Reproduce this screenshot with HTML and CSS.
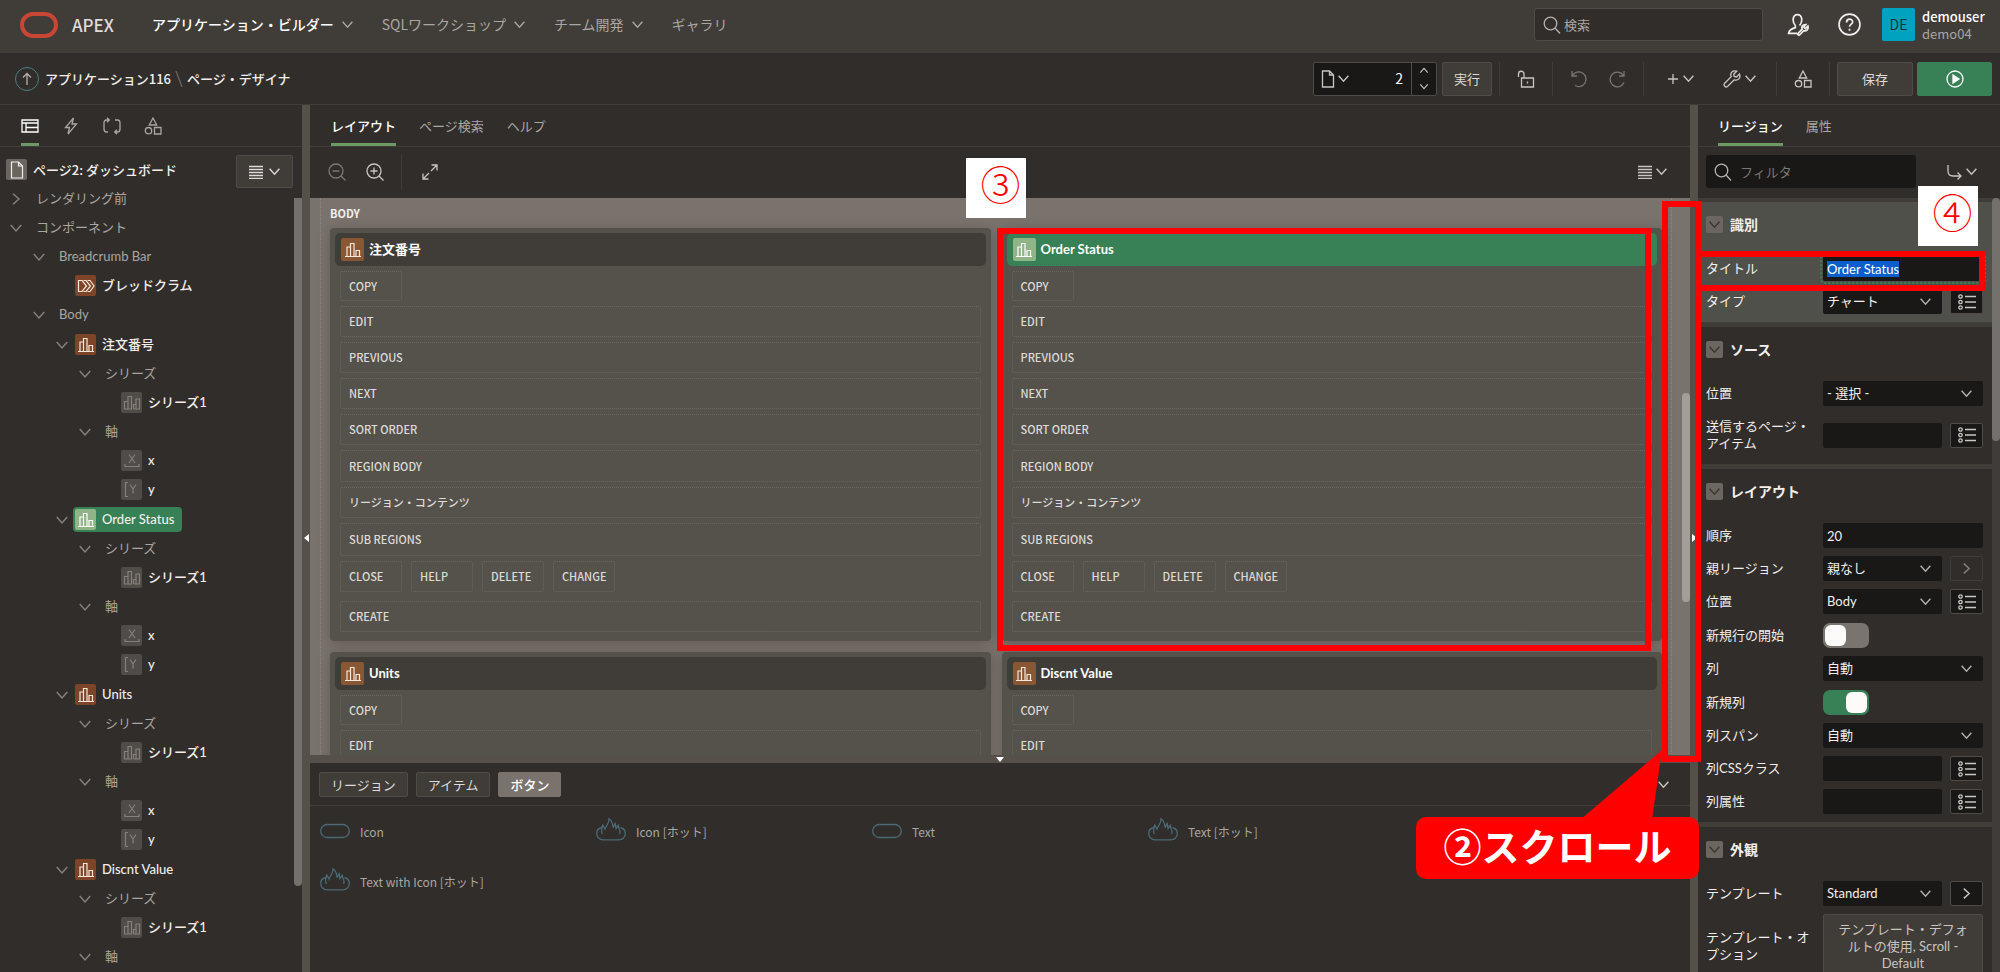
FILE: index.html
```html
<!DOCTYPE html>
<html lang="ja">

<head>
    <meta charset="UTF-8">
    <meta name="viewport" content="width=device-width, initial-scale=1.0">
    <title>ページ・デザイナ</title>
    <link rel="stylesheet" href="styles.css">
</head>

<body>
    <svg class="sprite" aria-hidden="true">
        <symbol id="down" viewBox="0 0 12 12"><path d="M1.5 3.5 6 8.5l4.5-5" /></symbol>
        <symbol id="right" viewBox="0 0 12 12"><path d="M3.5 1.5 8.5 6l-5 4.5" /></symbol>
        <symbol id="up" viewBox="0 0 12 12"><path d="M1.5 8.5 6 3.5l4.5 5" /></symbol>
        <symbol id="search" viewBox="0 0 18 18"><circle cx="7.5" cy="7.5" r="6.3" /><path d="m12 12 5 5.5" /></symbol>
        <symbol id="minus" viewBox="0 0 18 18"><circle cx="8" cy="8" r="7" /><path d="m13 13 4.500 4.500M4.500 8h7" /></symbol>
        <symbol id="plus" viewBox="0 0 18 18"><circle cx="8" cy="8" r="7" /><path d="m13 13 4.500 4.500M4.500 8h7M8 4.500v7" /></symbol>
        <symbol id="list" viewBox="0 0 14 14"><path d="M0 1.500h14M0 4.500h14M0 7.500h14M0 10.500h14M0 13.500h14" /></symbol>
        <symbol id="doc" viewBox="0 0 18 18"><path d="M3.5 1h7l4 4v12h-11zM10.500 1v4h4" /></symbol>
        <symbol id="shapes" viewBox="0 0 18 18"><path d="m9 1 3.700 7H5.300zM10.500 10.500h6.500V17h-6.500z" /><circle cx="4.500" cy="13.700" r="3.200" /></symbol>
        <symbol id="chart" viewBox="0 0 18 18"><path d="M1 15.500h16M3 15.500V6h3.500v9.500M6.500 15.500V2.500H10v13M12 15.500V9.500h3.500v6" /></symbol>
        <symbol id="series" viewBox="0 0 18 18"><path d="M1.500 15V7.500H5V15zM5 15V2.500h3.500V15zM10.500 15v-4.500h2.500M13 15V5h3.500v10h-6" /></symbol>
        <symbol id="crumb" viewBox="0 0 18 18"><path d="M1.500 3.500h3.500L9.500 9 5 14.500H1.500zM6.500 3.500h2.500l4.500 5.500L9 14.500H6.500M10.500 3.500H13L17 9l-4 5.500h-2.500" /></symbol>
        <symbol id="axis-x" viewBox="0 0 18 18"><path d="M6 2.500 12 11M12 2.500 6 11M2 12v2.500h14V12" /></symbol>
        <symbol id="axis-y" viewBox="0 0 18 18"><path d="M5 1.500H2.500v14H5M7 3.500l3 4.500 3-4.500M10 8v4.500" /></symbol>
        <symbol id="picker" viewBox="0 0 18 16"><circle cx="2.500" cy="2.500" r="1.700" /><circle cx="2.500" cy="8" r="1.700" /><circle cx="2.500" cy="13.500" r="1.700" /><path d="M7 2.500h11M7 8h11M7 13.500h11" /></symbol>
        <symbol id="pill" viewBox="0 0 30 26"><rect x=".7" y="6.500" width="28.600" height="13" rx="6.500" /></symbol>
        <symbol id="fire" viewBox="0 0 30 26"><path d="M5.500 9.500C1.500 10.500.7 13 .7 15.500a6.300 6.300 0 0 0 6.300 6.300h16a6.300 6.300 0 0 0 6.300-6.300c0-2.500-.8-5-4.800-6M6.500 16c-2-3-.5-6 .3-9 1 1.500 1.700 2.500 2.200 4C10.500 7 13.500 5 13 .8c2.800 2 4 5.500 4 9l2.200-4.300c.5 2 .6 3.500.8 5l2.300-3c0 3 3 5.500 1.200 8.500" /></symbol>
    </svg>

    <header class="header">
        <svg class="logo" viewBox="0 0 38 26"><rect x="2" y="2" width="34" height="22" rx="11" /></svg>
        <span class="brand">APEX</span>
        <nav class="nav">
            <a class="active" href="#">アプリケーション・ビルダー<svg class="ic s"><use href="#down" /></svg></a>
            <a href="#">SQLワークショップ<svg class="ic s"><use href="#down" /></svg></a>
            <a href="#">チーム開発<svg class="ic s"><use href="#down" /></svg></a>
            <a href="#">ギャラリ</a>
        </nav>
        <label class="search">
            <svg class="ic l"><use href="#search" /></svg>
            <input type="text" placeholder="検索" aria-label="検索">
        </label>
        <button class="head-btn" type="button" aria-label="管理">
            <svg class="ic xl" viewBox="0 0 22 22"><path d="M8 12C4.500 8 5.500 1.500 10 1.500S15.500 8 12 12M8 12v2c-3 .8-6 2-6.500 5.500h8M20 12.500l-2.500 2.500-1.500-1.500 2-2.500c-3-.3-4.500 2-3.500 4.500L10 20l1.500 1.500 4.500-4.500c2.500.8 5-1.500 4-4.500z" /></svg>
        </button>
        <button class="head-btn" type="button" aria-label="ヘルプ">
            <svg class="ic xl" viewBox="0 0 22 22"><circle cx="11" cy="11" r="10" /><path d="M8.200 9c0-4 5.800-4 5.800-.5 0 2-3 2.300-3 4.700M11 15v2" /></svg>
        </button>
        <div class="avatar">DE</div>
        <div class="user"><b>demouser</b><span>demo04</span></div>
    </header>

    <div class="toolbar">
        <a class="up" href="#" aria-label="上へ"><svg class="ic l" viewBox="0 0 18 18"><path d="M9 15V3.500M5 7.500l4-4 4 4" /></svg></a>
        <a class="crumb" href="#">アプリケーション116</a>
        <svg class="ic slash" viewBox="0 0 8 16"><path d="m1 0 6 16" /></svg>
        <span class="crumb">ページ・デザイナ</span>
        <div class="tools">
            <div class="combo">
                <button type="button" aria-label="ページ"><svg class="ic l"><use href="#doc" /></svg><svg class="ic s"><use href="#down" /></svg></button>
                <input type="text" value="2" aria-label="ページ番号">
                <div class="spin">
                    <button type="button" aria-label="次"><svg class="ic s"><use href="#up" /></svg></button>
                    <button type="button" aria-label="前"><svg class="ic s"><use href="#down" /></svg></button>
                </div>
            </div>
            <button class="btn run" type="button">実行</button>
            <div class="group">
                <button class="tool" type="button" aria-label="ロック"><svg class="ic l" viewBox="0 0 18 18"><path d="M4.500 12V8h12v9h-12V8M1.500 7V4a2.700 2.700 0 0 1 5.500 0v4M10.500 11.500v2" /></svg></button>
            </div>
            <div class="group dim">
                <button class="tool" type="button" aria-label="元に戻す"><svg class="ic l" viewBox="0 0 18 18"><path d="M2 1v5h5M2.500 5.500A7.300 7.300 0 1 1 5 15.500" /></svg></button>
                <button class="tool" type="button" aria-label="やり直し"><svg class="ic l" viewBox="0 0 18 18"><path d="M16 1v5h-5M15.500 5.500A7.300 7.300 0 1 0 16 12.500" /></svg></button>
            </div>
            <div class="group">
                <button class="tool wide" type="button" aria-label="作成"><svg class="ic" viewBox="0 0 12 12"><path d="M6 1v10M1 6h10" /></svg><svg class="ic s"><use href="#down" /></svg></button>
                <button class="tool wide" type="button" aria-label="ユーティリティ"><svg class="ic l" viewBox="0 0 18 18"><path d="m16.500 4-3 3-2.300-.5-.5-2.300 3-3c-4-1.400-7 1.800-5.500 5.500L1.500 13.500c-1.400 2 1 4.500 3 3l6.800-6.700C15 11 18 8 16.500 4z" /></svg><svg class="ic s"><use href="#down" /></svg></button>
            </div>
            <div class="group">
                <button class="tool" type="button" aria-label="共有コンポーネント"><svg class="ic l"><use href="#shapes" /></svg></button>
            </div>
            <div class="group actions">
                <button class="btn" type="button">保存</button>
                <button class="btn go" type="button" aria-label="保存して実行"><svg class="ic l" viewBox="0 0 18 18"><circle cx="9" cy="9" r="8" /><path class="solid" d="m7 5 6 4-6 4z" /></svg></button>
            </div>
        </div>
    </div>

    <div class="designer">
        <aside class="left">
            <div class="tabs icons">
                <button class="active" type="button" aria-label="レンダリング"><svg class="ic l" viewBox="0 0 18 18"><path d="M1 3h16v12H1zM1 6h16M5 6v9M5 10.500h12" /></svg></button>
                <button type="button" aria-label="動的アクション"><svg class="ic l" viewBox="0 0 18 18"><path d="M11.500 1 3.500 10.500h4L6 17l8.500-10h-4.500z" /></svg></button>
                <button type="button" aria-label="処理"><svg class="ic l" viewBox="0 0 18 18"><path d="M6 3H3.500Q1 3 1 6v6q0 3 2.500 3H5M4 .8 6.300 3 4 5.200M12 15h2.500q2.500 0 2.500-3V6q0-3-2.500-3H12M14 12.800 11.700 15l2.300 2.200" /></svg></button>
                <button type="button" aria-label="共有コンポーネント"><svg class="ic l"><use href="#shapes" /></svg></button>
            </div>
            <div class="page-title">
                <span class="box page"><svg class="ic l"><use href="#doc" /></svg></span>
                <span>ページ2: ダッシュボード</span>
                <button class="btn menu" type="button" aria-label="メニュー"><svg class="ic m"><use href="#list" /></svg><svg class="ic s"><use href="#down" /></svg></button>
            </div>
            <div class="tree-wrap">
                <ul class="tree">
                    <li class="group-row"><svg class="ic s"><use href="#right" /></svg>レンダリング前</li>
                    <li class="group-row"><svg class="ic s"><use href="#down" /></svg>コンポーネント</li>
                    <li class="group-row l1"><svg class="ic s"><use href="#down" /></svg>Breadcrumb Bar</li>
                    <li class="l2 leaf"><span class="box orange"><svg class="ic l"><use href="#crumb" /></svg></span>ブレッドクラム</li>
                    <li class="group-row l1"><svg class="ic s"><use href="#down" /></svg>Body</li>

                    <li class="l2 region-row"><svg class="ic s"><use href="#down" /></svg><span class="box orange"><svg class="ic l"><use href="#chart" /></svg></span>注文番号</li>
                    <li class="group-row l3"><svg class="ic s"><use href="#down" /></svg>シリーズ</li>
                    <li class="l4 leaf"><span class="box"><svg class="ic l"><use href="#series" /></svg></span>シリーズ1</li>
                    <li class="group-row l3"><svg class="ic s"><use href="#down" /></svg>軸</li>
                    <li class="l4 leaf"><span class="box"><svg class="ic l"><use href="#axis-x" /></svg></span>x</li>
                    <li class="l4 leaf"><span class="box"><svg class="ic l"><use href="#axis-y" /></svg></span>y</li>

                    <li class="l2 region-row"><svg class="ic s"><use href="#down" /></svg><span class="selected"><span class="box green"><svg class="ic l"><use href="#chart" /></svg></span>Order Status</span></li>
                    <li class="group-row l3"><svg class="ic s"><use href="#down" /></svg>シリーズ</li>
                    <li class="l4 leaf"><span class="box"><svg class="ic l"><use href="#series" /></svg></span>シリーズ1</li>
                    <li class="group-row l3"><svg class="ic s"><use href="#down" /></svg>軸</li>
                    <li class="l4 leaf"><span class="box"><svg class="ic l"><use href="#axis-x" /></svg></span>x</li>
                    <li class="l4 leaf"><span class="box"><svg class="ic l"><use href="#axis-y" /></svg></span>y</li>

                    <li class="l2 region-row"><svg class="ic s"><use href="#down" /></svg><span class="box orange"><svg class="ic l"><use href="#chart" /></svg></span>Units</li>
                    <li class="group-row l3"><svg class="ic s"><use href="#down" /></svg>シリーズ</li>
                    <li class="l4 leaf"><span class="box"><svg class="ic l"><use href="#series" /></svg></span>シリーズ1</li>
                    <li class="group-row l3"><svg class="ic s"><use href="#down" /></svg>軸</li>
                    <li class="l4 leaf"><span class="box"><svg class="ic l"><use href="#axis-x" /></svg></span>x</li>
                    <li class="l4 leaf"><span class="box"><svg class="ic l"><use href="#axis-y" /></svg></span>y</li>

                    <li class="l2 region-row"><svg class="ic s"><use href="#down" /></svg><span class="box orange"><svg class="ic l"><use href="#chart" /></svg></span>Discnt Value</li>
                    <li class="group-row l3"><svg class="ic s"><use href="#down" /></svg>シリーズ</li>
                    <li class="l4 leaf"><span class="box"><svg class="ic l"><use href="#series" /></svg></span>シリーズ1</li>
                    <li class="group-row l3"><svg class="ic s"><use href="#down" /></svg>軸</li>
                </ul>
                <div class="thumb"></div>
            </div>
        </aside>

        <div class="splitter"><i class="to-left"></i></div>

        <main class="main">
            <div class="tabs">
                <button class="active" type="button">レイアウト</button>
                <button type="button">ページ検索</button>
                <button type="button">ヘルプ</button>
            </div>
            <div class="canvas-tools">
                <button class="tool dim" type="button" aria-label="縮小"><svg class="ic l"><use href="#minus" /></svg></button>
                <button class="tool" type="button" aria-label="拡大"><svg class="ic l"><use href="#plus" /></svg></button>
                <div class="group">
                    <button class="tool" type="button" aria-label="展開"><svg class="ic l" viewBox="0 0 18 18"><path d="M10.500 2H16v5.500M16 2l-6 6M7.500 16H2v-5.500M2 16l6-6" /></svg></button>
                </div>
                <button class="tool wide last" type="button" aria-label="メニュー"><svg class="ic m"><use href="#list" /></svg><svg class="ic s"><use href="#down" /></svg></button>
            </div>
            <div class="canvas">
                <div class="body-slot">
                    <div class="body-name">BODY</div>
                    <div class="cards">
                        <section class="card">
                            <h3><span class="box orange"><svg class="ic l"><use href="#chart" /></svg></span>注文番号</h3>
                            <div class="slots">
                                <div class="slot small">COPY</div>
                                <div class="slot">EDIT</div>
                                <div class="slot">PREVIOUS</div>
                                <div class="slot">NEXT</div>
                                <div class="slot">SORT ORDER</div>
                                <div class="slot">REGION BODY</div>
                                <div class="slot">リージョン・コンテンツ</div>
                                <div class="slot">SUB REGIONS</div>
                                <div class="slot-row">
                                    <div class="slot small">CLOSE</div>
                                    <div class="slot small">HELP</div>
                                    <div class="slot small">DELETE</div>
                                    <div class="slot small">CHANGE</div>
                                </div>
                                <div class="slot">CREATE</div>
                            </div>
                        </section>
                        <section class="card active">
                            <h3><span class="box green"><svg class="ic l"><use href="#chart" /></svg></span>Order Status</h3>
                            <div class="slots">
                                <div class="slot small">COPY</div>
                                <div class="slot">EDIT</div>
                                <div class="slot">PREVIOUS</div>
                                <div class="slot">NEXT</div>
                                <div class="slot">SORT ORDER</div>
                                <div class="slot">REGION BODY</div>
                                <div class="slot">リージョン・コンテンツ</div>
                                <div class="slot">SUB REGIONS</div>
                                <div class="slot-row">
                                    <div class="slot small">CLOSE</div>
                                    <div class="slot small">HELP</div>
                                    <div class="slot small">DELETE</div>
                                    <div class="slot small">CHANGE</div>
                                </div>
                                <div class="slot">CREATE</div>
                            </div>
                        </section>
                        <section class="card">
                            <h3><span class="box orange"><svg class="ic l"><use href="#chart" /></svg></span>Units</h3>
                            <div class="slots">
                                <div class="slot small">COPY</div>
                                <div class="slot">EDIT</div>
                            </div>
                        </section>
                        <section class="card">
                            <h3><span class="box orange"><svg class="ic l"><use href="#chart" /></svg></span>Discnt Value</h3>
                            <div class="slots">
                                <div class="slot small">COPY</div>
                                <div class="slot">EDIT</div>
                            </div>
                        </section>
                    </div>
                </div>
                <div class="thumb"></div>
            </div>
            <div class="splitter flat"><i class="to-down"></i></div>
            <div class="gallery">
                <div class="gallery-tabs">
                    <button class="btn" type="button">リージョン</button>
                    <button class="btn" type="button">アイテム</button>
                    <button class="btn active" type="button">ボタン</button>
                    <button class="tool last" type="button" aria-label="閉じる"><svg class="ic s"><use href="#down" /></svg></button>
                </div>
                <div class="gallery-items">
                    <div><svg class="ic"><use href="#pill" /></svg>Icon</div>
                    <div><svg class="ic"><use href="#fire" /></svg>Icon [ホット]</div>
                    <div><svg class="ic"><use href="#pill" /></svg>Text</div>
                    <div><svg class="ic"><use href="#fire" /></svg>Text [ホット]</div>
                    <div><svg class="ic"><use href="#pill" /></svg></div>
                    <div><svg class="ic"><use href="#fire" /></svg>Text with Icon [ホット]</div>
                </div>
            </div>
        </main>

        <div class="splitter"><i class="to-right"></i></div>

        <aside class="right">
            <div class="tabs">
                <button class="active" type="button">リージョン</button>
                <button type="button">属性</button>
            </div>
            <div class="filter">
                <label class="search">
                    <svg class="ic l"><use href="#search" /></svg>
                    <input type="text" placeholder="フィルタ" aria-label="フィルタ">
                </label>
                <button class="tool last" type="button" aria-label="グループに移動"><svg class="ic l" viewBox="0 0 18 18"><path d="M3 2v6q0 5 5 5h8M12.500 9.500 16 13l-3.500 3.500" /></svg><svg class="ic s"><use href="#down" /></svg></button>
            </div>
            <div class="props">
                <section class="focus">
                    <h4><span><svg class="ic s"><use href="#down" /></svg></span>識別</h4>
                    <div class="prop">
                        <label for="title">タイトル</label>
                        <input id="title" type="text" value="Order Status">
                    </div>
                    <div class="prop">
                        <label for="type">タイプ</label>
                        <div class="select"><select id="type"><option>チャート</option></select><svg class="ic s"><use href="#down" /></svg></div>
                        <button class="pick" type="button" aria-label="選択"><svg class="ic l"><use href="#picker" /></svg></button>
                    </div>
                </section>
                <section>
                    <h4><span><svg class="ic s"><use href="#down" /></svg></span>ソース</h4>
                    <div class="prop">
                        <label for="src">位置</label>
                        <div class="select"><select id="src"><option>- 選択 -</option></select><svg class="ic s"><use href="#down" /></svg></div>
                    </div>
                    <div class="prop two">
                        <label for="items">送信するページ・アイテム</label>
                        <input id="items" type="text">
                        <button class="pick" type="button" aria-label="選択"><svg class="ic l"><use href="#picker" /></svg></button>
                    </div>
                </section>
                <section>
                    <h4><span><svg class="ic s"><use href="#down" /></svg></span>レイアウト</h4>
                    <div class="prop">
                        <label for="seq">順序</label>
                        <input id="seq" type="text" value="20">
                    </div>
                    <div class="prop">
                        <label for="parent">親リージョン</label>
                        <div class="select"><select id="parent"><option>親なし</option></select><svg class="ic s"><use href="#down" /></svg></div>
                        <button class="pick" type="button" aria-label="移動" disabled><svg class="ic s"><use href="#right" /></svg></button>
                    </div>
                    <div class="prop">
                        <label for="pos">位置</label>
                        <div class="select"><select id="pos"><option>Body</option></select><svg class="ic s"><use href="#down" /></svg></div>
                        <button class="pick" type="button" aria-label="選択"><svg class="ic l"><use href="#picker" /></svg></button>
                    </div>
                    <div class="prop tall">
                        <label for="newrow">新規行の開始</label>
                        <input id="newrow" class="switch" type="checkbox">
                    </div>
                    <div class="prop">
                        <label for="col">列</label>
                        <div class="select"><select id="col"><option>自動</option></select><svg class="ic s"><use href="#down" /></svg></div>
                    </div>
                    <div class="prop tall">
                        <label for="newcol">新規列</label>
                        <input id="newcol" class="switch" type="checkbox" checked>
                    </div>
                    <div class="prop">
                        <label for="span">列スパン</label>
                        <div class="select"><select id="span"><option>自動</option></select><svg class="ic s"><use href="#down" /></svg></div>
                    </div>
                    <div class="prop">
                        <label for="css">列CSSクラス</label>
                        <input id="css" type="text">
                        <button class="pick" type="button" aria-label="選択"><svg class="ic l"><use href="#picker" /></svg></button>
                    </div>
                    <div class="prop">
                        <label for="attr">列属性</label>
                        <input id="attr" type="text">
                        <button class="pick" type="button" aria-label="選択"><svg class="ic l"><use href="#picker" /></svg></button>
                    </div>
                </section>
                <section>
                    <h4><span><svg class="ic s"><use href="#down" /></svg></span>外観</h4>
                    <div class="prop">
                        <label for="tpl">テンプレート</label>
                        <div class="select"><select id="tpl"><option>Standard</option></select><svg class="ic s"><use href="#down" /></svg></div>
                        <button class="pick" type="button" aria-label="移動"><svg class="ic s"><use href="#right" /></svg></button>
                    </div>
                    <div class="prop options">
                        <label for="opt">テンプレート・オプション</label>
                        <button id="opt" class="btn" type="button">テンプレート・デフォルトの使用, Scroll - Default</button>
                    </div>
                </section>
                <div class="thumb"></div>
            </div>
        </aside>
    </div>

    <!-- step marks over the screen -->
    <div class="mark mark-region"></div>
    <div class="mark mark-scroll"></div>
    <div class="mark mark-title"></div>
    <div class="step step3">③</div>
    <div class="step step4">④</div>
    <svg class="tail" viewBox="0 0 82 70"><path d="M0 70 82 0 72 70z" /></svg>
    <div class="callout">②スクロール</div>

    <script>
        document.querySelector("#title").select();
    </script>
</body>

</html>
```
FILE: styles.css
```css
* {
    box-sizing: border-box;
}

body {
    margin: 0;
    height: 100vh;
    display: flex;
    flex-direction: column;
    overflow: hidden;
    position: relative;
    background-color: #312d2a;
    color: #f1efed;
    font-family: "Noto Sans CJK JP", "Open Sans", sans-serif;
    font-size: 13px;
    line-height: 17px;
}

button,
input,
select {
    font: inherit;
    color: inherit;
    margin: 0;
}

button {
    display: flex;
    align-items: center;
    justify-content: center;
    padding: 0;
    border: 0;
    background: none;
}

a {
    color: inherit;
    text-decoration: none;
}

.sprite {
    position: absolute;
    width: 0;
    height: 0;
}

.ic {
    flex: none;
    width: 12px;
    height: 12px;
    fill: none;
    stroke: currentColor;
    stroke-width: 1.3;

    &.s {
        width: 13px;
        height: 13px;
    }

    &.m {
        width: 14px;
        height: 14px;
    }

    &.l {
        width: 18px;
        height: 18px;
    }

    &.xl {
        width: 23px;
        height: 23px;
        stroke-width: 1.6;
    }

    & .solid {
        fill: currentColor;
    }
}

/* header */
.header {
    flex: none;
    height: 53px;
    display: flex;
    align-items: center;
    padding: 0 15px 4px 20px;
    background-color: #403c38;
}

.logo {
    width: 38px;
    height: 26px;
    fill: none;
    stroke: #c74634;
    stroke-width: 4;
}

.brand {
    margin: 0 38px 0 14px;
    font-size: 17px;
    font-weight: 500;
    color: #dedbd8;
}

.nav {
    display: flex;
    gap: 28px;
    flex: 1;
    font-size: 14px;
    color: #aaa6a1;

    & a {
        display: flex;
        align-items: center;
        gap: 7px;
    }

    & .active {
        color: #fff;
        font-weight: 500;
    }

    & .ic {
        color: #aaa6a1;
    }
}

.search {
    display: flex;
    align-items: center;
    height: 33px;
    padding: 0 8px;
    border-radius: 3px;

    & .ic {
        color: #b5b1ac;
    }

    & input {
        flex: 1;
        min-width: 0;
        border: 0;
        outline: 0;
        background: none;
        padding: 0 3px;
    }

    & ::placeholder {
        color: #aaa6a1;
        opacity: 1;
    }
}

.header .search {
    width: 229px;
    margin-right: 24px;
    background-color: #312d2a;
    border: 1px solid #504b46;
}

.head-btn {
    width: 23px;
    margin-right: 28px;

    & + .head-btn {
        margin-right: 21px;
    }
}

.avatar {
    width: 33px;
    height: 33px;
    display: grid;
    place-items: center;
    border-radius: 2px;
    background-color: #00a2bf;
    color: #16323a;
    font-size: 14px;
}

.user {
    display: grid;
    margin-left: 7px;
    width: 63px;
    color: #aaa6a1;

    & b {
        color: #fff;
        font-weight: 500;
    }
}

/* toolbar */
.toolbar {
    flex: none;
    height: 52px;
    display: flex;
    align-items: center;
    padding: 0 8px 0 15px;
    border-bottom: 1px solid #403c38;
}

.up {
    width: 24px;
    height: 24px;
    display: grid;
    place-items: center;
    margin-right: 6px;
    border: 1px solid #4a7f86;
    border-radius: 50%;
    color: #b5b1ac;
}

.crumb {
    font-weight: 500;
}

.slash {
    width: 8px;
    height: 16px;
    margin: 0 4px;
    color: #6b6661;
}

.tools {
    display: flex;
    align-items: center;
    margin-left: auto;
}

.combo {
    display: flex;
    width: 124px;
    height: 34px;
    margin-right: 5px;
    border: 1px solid #504b46;
    border-radius: 2px;
    background-color: #1a1816;
    color: #c9c5c0;

    & > button {
        width: 40px;
    }

    & input {
        flex: 1;
        min-width: 0;
        border: 0;
        background: none;
        text-align: right;
        padding: 0 8px;
        font-size: 14px;
        color: #fff;
    }
}

.spin {
    display: grid;
    width: 25px;
    border-left: 1px solid #504b46;

    & .ic {
        width: 10px;
    }
}

.btn {
    height: 34px;
    border: 1px solid #504b46;
    border-radius: 2px;
    background-color: #403c38;
    color: #dedbd8;
}

.run {
    width: 50px;
    margin-right: 7px;
}

.group {
    display: flex;
    align-items: center;
    height: 34px;
    padding: 0 7px;
    border-left: 1px solid #403c38;
}

.tool {
    width: 38px;
    height: 33px;
    color: #c9c5c0;

    &.wide {
        width: 59px;
        gap: 3px;
    }

    &.last {
        margin-left: auto;
    }
}

.dim .tool,
.tool.dim {
    color: #7b7671;
}

.actions {
    padding-right: 0;
    gap: 4px;

    & .btn {
        width: 76px;
    }

    & .go {
        width: 75px;
        border-color: #388055;
        background-color: #388055;
        color: #fff;
    }
}

/* three columns */
.designer {
    flex: 1;
    min-height: 0;
    display: grid;
    grid-template-columns: 302px 8px 1fr 8px 302px;
}

.left,
.main,
.right {
    min-width: 0;
    min-height: 0;
    display: flex;
    flex-direction: column;
}

.splitter {
    position: relative;
    background-color: #55514a;

    & i {
        position: absolute;
        border: 4px solid transparent;
    }

    & .to-left {
        top: 429px;
        left: -2px;
        border-right: 5px solid #fff;
    }

    & .to-right {
        top: 429px;
        left: 2px;
        border-left: 5px solid #fff;
    }

    & .to-down {
        left: 50%;
        top: 2px;
        margin-left: -4px;
        border-top: 5px solid #fff;
    }
}

.flat {
    flex: none;
    height: 8px;
}

.tabs {
    flex: none;
    display: flex;
    gap: 23px;
    height: 42px;
    padding: 0 21px;
    border-bottom: 1px solid #403c38;

    & button {
        padding-top: 3px;
        border-bottom: 3px solid transparent;
        color: #aaa6a1;
    }

    & .active {
        color: #fff;
        border-color: #6c9a66;
    }
}

.main .tabs .active,
.right .tabs .active {
    font-weight: 500;
}

.right .tabs {
    padding: 0 20px;
}

.page-title {
    flex: none;
    display: flex;
    align-items: center;
    gap: 6px;
    height: 37px;
    padding: 8px 9px 0 6px;
    font-weight: 500;
}

.menu {
    width: 57px;
    height: 33px;
    align-self: flex-start;
    margin-left: auto;
    gap: 5px;
}

.box {
    flex: none;
    display: grid;
    place-items: center;
    width: 21px;
    height: 21px;
    border-radius: 2px;
    background-color: #504c47;
    color: #85807b;

    & .ic {
        stroke-width: 1.2;
    }
}

.page {
    background-color: #6b6560;
    color: #f1efed;
}

.orange {
    background-color: #7d4427;
    color: #f7e8da;
}

.green {
    background-color: #8fb587;
    color: #fff;
}

.tree-wrap {
    flex: 1;
    min-height: 0;
    overflow: hidden;
    position: relative;
}

.tree,
.card h3,
.props {
    font-family: Lato, "Noto Sans CJK JP", sans-serif;
}

.tree {
    list-style: none;
    margin: 0;
    padding: 0;

    & li {
        display: flex;
        align-items: center;
        gap: 6px;
        height: 29px;
        padding-left: 9px;
        font-weight: 500;

        & > .ic {
            width: 14px;
            height: 14px;
            color: #85807b;
        }
    }

    & .group-row {
        gap: 13px;
        color: #aaa6a1;
        font-weight: 400;
    }

    & .region-row {
        margin-top: 1px;
    }

    & .l1 {
        padding-left: 32px;
    }

    & .l2 {
        padding-left: 55px;
    }

    & .l3 {
        padding-left: 78px;
    }

    & .l4 {
        padding-left: 121px;
    }

    & .l2.leaf {
        padding-left: 75px;
    }
}

.selected {
    display: flex;
    align-items: center;
    gap: 6px;
    height: 25px;
    margin-left: -2px;
    padding: 0 8px 0 2px;
    border-radius: 4px;
    background-color: #388055;
}

.thumb {
    position: absolute;
    right: 0;
    width: 8px;
    border-radius: 4px;
    background-color: #74716d;
}

.tree-wrap .thumb {
    top: 14px;
    height: 688px;
    border-radius: 0 0 4px 4px;
}

/* layout canvas */
.canvas-tools {
    flex: none;
    display: flex;
    align-items: center;
    height: 51px;
    padding: 0 8px 2px 8px;

    & .group {
        margin-left: 7px;
        padding: 0 9px;
    }
}

.canvas {
    flex: 1;
    min-height: 0;
    overflow: hidden;
    position: relative;
    padding: 0 18px 0 10px;
    background-color: #7a726d;
}

.body-slot {
    padding: 7px 9px 0;
    border: 1px dotted #908882;
    border-width: 0 1px;
}

.body-name {
    margin-bottom: 6px;
    font-size: 11px;
    font-weight: 700;
}

.cards {
    display: grid;
    grid-template-columns: 1fr 1fr;
    gap: 11px;
}

.card {
    padding: 5px 5px 9px;
    border-radius: 4px;
    background-color: #55514b;
    box-shadow: 0 2px 14px rgb(0 0 0 / 20%);

    & h3 {
        display: flex;
        align-items: center;
        gap: 5px;
        height: 33px;
        margin: 0 0 5px;
        padding: 0 6px;
        border-radius: 5px;
        background-color: #403c37;
        font-size: 13px;
        font-weight: 700;
        color: #fff;
    }

    & .box {
        width: 23px;
        height: 23px;
    }

    & .orange {
        background-color: #8a5735;
    }

    &.active h3 {
        background-color: #388055;
    }
}

.slots {
    display: grid;
    gap: 5px;
    padding: 0 5px;
}

.slot {
    display: flex;
    align-items: center;
    min-height: 31px;
    padding: 0 8px;
    border: 1px dotted #6b6760;
    border-radius: 2px;
    font-size: 11px;
    font-weight: 500;
    color: #dedbd8;

    &:nth-child(6) {
        min-height: 32px;
    }

    &:nth-child(8) {
        min-height: 33px;
    }
}

.slots > .small {
    min-height: 30px;
}

.small {
    width: 62px;
}

.slot-row {
    display: flex;
    gap: 9px;
    margin-bottom: 4px;
}

.canvas .thumb {
    top: 195px;
    height: 209px;
    background-color: #a39e99;
}

/* component gallery */
.gallery {
    flex: none;
    height: 209px;
}

.gallery-tabs {
    display: flex;
    align-items: center;
    gap: 8px;
    height: 43px;
    padding: 0 8px 0 9px;
    border-bottom: 1px solid #403c38;

    & .btn {
        height: 25px;
        padding: 0 11px;
    }

    & .active {
        border-color: #7a726d;
        background-color: #7a726d;
        color: #fff;
        font-weight: 500;
    }
}

.gallery-items {
    display: grid;
    grid-template-columns: repeat(5, 1fr);

    & div {
        display: flex;
        align-items: center;
        gap: 10px;
        height: 50px;
        padding-left: 10px;
        font-size: 12px;
        color: #aaa6a1;
    }

    & .ic {
        width: 30px;
        height: 26px;
        color: #4a6a75;
    }
}

/* property editor */
.filter {
    flex: none;
    display: flex;
    align-items: center;
    height: 51px;
    padding: 0 20px 2px 8px;

    & .search {
        width: 210px;
        padding: 0 8px;
        background-color: #1a1816;
    }

    & input {
        padding: 0 8px;
    }

    & ::placeholder {
        color: #7b7671;
    }

    & .tool {
        gap: 2px;
    }
}

.props {
    flex: 1;
    min-height: 0;
    overflow: hidden;
    position: relative;
    padding: 4px 8px 0 0;
    background-color: #403c38;

    & section {
        margin-bottom: 5px;
        padding: 0 9px 4px 8px;
        background-color: #312d2a;
    }

    & .focus {
        background-color: #4f5049;
    }

    & h4 {
        display: flex;
        align-items: center;
        gap: 7px;
        height: 45px;
        margin: 0 0 5px;
        font-size: 14px;
        font-weight: 700;

        & span {
            display: grid;
            place-items: center;
            width: 17px;
            height: 17px;
            border-radius: 2px;
            background-color: #6b6660;
            color: #3a3632;
        }
    }

    & .thumb {
        top: 0;
        height: 243px;
    }
}

.prop {
    display: flex;
    align-items: center;
    height: 33px;

    & label {
        flex: none;
        width: 117px;
        padding-right: 8px;
    }

    & input,
    & select {
        flex: 1;
        width: 100%;
        min-width: 0;
        height: 25px;
        padding: 0 4px;
        border: 0;
        border-radius: 2px;
        background-color: #1a1816;
    }

    & select {
        appearance: none;
    }

    & input:focus {
        outline: 2px dotted #388055;
        outline-offset: 1px;
    }

    & ::selection {
        background-color: #0a5fcc;
        color: #fff;
    }

    &.tall {
        height: 34px;
    }

    &.two {
        height: 50px;
    }
}

.select {
    flex: 1;
    display: flex;
    position: relative;

    & .ic {
        position: absolute;
        right: 10px;
        top: 6px;
        color: #b5b1ac;
        pointer-events: none;
    }
}

.pick {
    flex: none;
    width: 33px;
    height: 25px;
    margin-left: 8px;
    border: 1px solid #504b46;
    border-radius: 2px;
    background-color: #1a1816;
    color: #c9c5c0;

    &:disabled {
        background: none;
        border-color: #403c38;
        color: #85807b;
    }
}

.prop .switch {
    flex: none;
    appearance: none;
    width: 46px;
    padding: 2px;
    border-radius: 7px;
    background-color: #7a746f;

    &::before {
        content: "";
        display: block;
        width: 21px;
        height: 21px;
        border-radius: 6px;
        background-color: #fcfbfa;
    }

    &:checked {
        background-color: #388055;
    }

    &:checked::before {
        margin-left: 21px;
    }
}

.options {
    height: 72px;

    & .btn {
        flex: 1;
        height: 64px;
        padding: 0 12px;
        color: #c9c5c0;
    }
}

/* step marks */
.mark {
    position: absolute;
    border: 6px solid #f00;
}

.mark-region {
    top: 228px;
    right: 349px;
    width: 654px;
    height: 423px;
}

.mark-scroll {
    top: 201px;
    right: 299px;
    bottom: 210px;
    width: 39px;
}

.mark-title {
    top: 251px;
    right: 15px;
    width: 290px;
    height: 40px;
}

.step {
    position: absolute;
    width: 60px;
    height: 60px;
    padding: 4px 0 0 9px;
    background-color: #fff;
    color: #f00;
    font-size: 40px;
    font-weight: 300;
    line-height: 43px;
    text-align: center;
}

.step3 {
    top: 158px;
    right: 974px;
}

.step4 {
    top: 186px;
    right: 22px;
}

.tail {
    position: absolute;
    right: 338px;
    bottom: 152px;
    width: 82px;
    height: 70px;
    fill: #f00;
}

.callout {
    position: absolute;
    right: 301px;
    bottom: 93px;
    width: 283px;
    height: 62px;
    border-radius: 10px;
    background-color: #f00;
    color: #fff;
    font-size: 38px;
    font-weight: 700;
    line-height: 56px;
    text-align: center;
}
```
